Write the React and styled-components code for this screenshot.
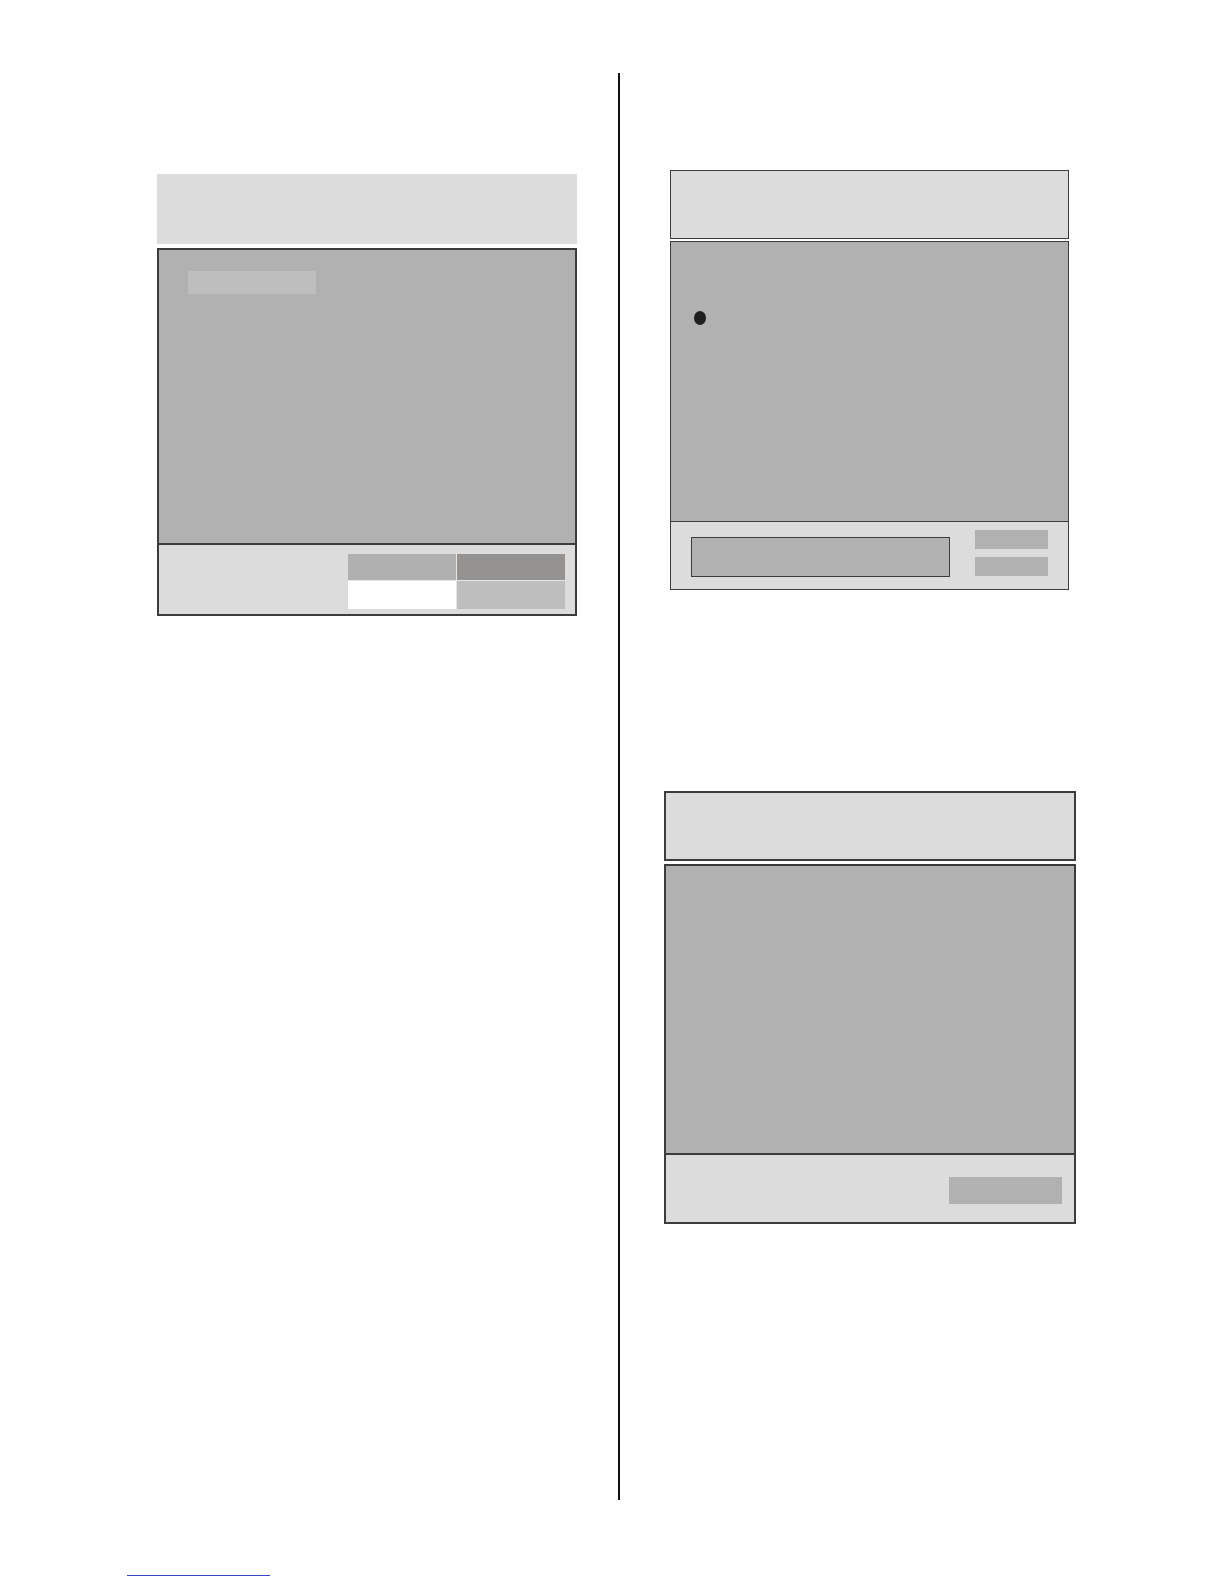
import React from "react"
import styled, { createGlobalStyle } from "styled-components"

const GlobalStyle = createGlobalStyle`
  * {
    box-sizing: border-box;
  }

  body {
    margin: 0;
    background: #ffffff;
    font-family: "Liberation Sans", Arial, sans-serif;
  }
`

const LIGHT = "#dcdcdc"
const MID = "#b1b1b1"
const EDGE = "#3c3c3c"

const Page = styled.div`
  display: flex;
  align-items: flex-start;
  width: 1224px;
`

const LeftColumn = styled.div`
  width: 618px;
  padding: 174px 0 0 157px;
`

const Divider = styled.div`
  width: 2px;
  height: 1427px;
  margin-top: 73px;
  background: #111111;
`

const RightColumn = styled.div`
  display: flex;
  flex-direction: column;
  padding-left: 50px;
`

const Panel = styled.div`
  display: flex;
  flex-direction: column;
  width: ${(p) => p.$width}px;
  margin-top: ${(p) => p.$top || 0}px;
  margin-left: ${(p) => p.$shift || 0}px;
`

const Header = styled.div`
  height: ${(p) => p.$height}px;
  background: ${LIGHT};
  border: ${(p) => (p.$plain ? "none" : `${p.$edge || 1}px solid ${EDGE}`)};
  margin-bottom: ${(p) => p.$gap}px;
`

const Body = styled.div`
  height: ${(p) => p.$height}px;
  background: ${MID};
  border: ${(p) => p.$edge || 1}px solid ${EDGE};
  padding: ${(p) => p.$pad || "0"};
`

const Footer = styled.div`
  display: flex;
  align-items: flex-start;
  justify-content: ${(p) => p.$justify || "flex-end"};
  height: ${(p) => p.$height}px;
  background: ${LIGHT};
  border: ${(p) => p.$edge || 1}px solid ${EDGE};
  border-top: none;
  padding: ${(p) => p.$pad};
`

const LabelBar = styled.div`
  width: 128px;
  height: 23px;
  background: #bebebe;
`

const Dot = styled.div`
  width: 12px;
  height: 14px;
  border-radius: 50%;
  background: #1f1f1f;
`

const ColorGrid = styled.div`
  display: grid;
  grid-template-columns: 108px 108px;
  grid-template-rows: 26px 28px;
  gap: 1px;
  background: #e6e6e6;
`

const Swatch = styled.div`
  background: ${(p) => p.$color};
`

const InputBox = styled.div`
  width: 259px;
  height: 40px;
  margin-top: 7px;
  background: ${MID};
  border: 1px solid ${EDGE};
`

const ButtonStack = styled.div`
  display: flex;
  flex-direction: column;
  gap: 8px;
`

const SmallButton = styled.div`
  width: ${(p) => p.$width}px;
  height: ${(p) => p.$height}px;
  background: ${MID};
`

const Footnote = styled.div`
  width: 143px;
  height: 1px;
  margin: 75px 0 8px 127px;
  background: #3a47c8;
`

const App = () => {
  return (
    <>
      <GlobalStyle />
      <Page>
        <LeftColumn>
          <Panel $width={420}>
            <Header $height={70} $gap={4} $plain />
            <Body $height={297} $edge={2} $pad="21px 0 0 29px">
              <LabelBar />
            </Body>
            <Footer $height={71} $edge={2} $pad="9px 10px 0 0">
              <ColorGrid>
                <Swatch $color="#b0b0b0" />
                <Swatch $color="#959392" />
                <Swatch $color="#ffffff" />
                <Swatch $color="#bebebe" />
              </ColorGrid>
            </Footer>
          </Panel>
        </LeftColumn>

        <Divider />

        <RightColumn>
          <Panel $width={399} $top={170}>
            <Header $height={69} $gap={2} />
            <Body $height={281} $pad="69px 0 0 23px">
              <Dot />
            </Body>
            <Footer $height={68} $justify="space-between" $pad="8px 20px 0 20px">
              <InputBox />
              <ButtonStack>
                <SmallButton $width={73} $height={19} />
                <SmallButton $width={73} $height={19} />
              </ButtonStack>
            </Footer>
          </Panel>

          <Panel $width={412} $top={201} $shift={-6}>
            <Header $height={70} $gap={3} $edge={2} />
            <Body $height={291} $edge={2} />
            <Footer $height={69} $edge={2} $pad="22px 12px 0 0">
              <SmallButton $width={113} $height={27} />
            </Footer>
          </Panel>
        </RightColumn>
      </Page>
      <Footnote />
    </>
  )
}

export default App
